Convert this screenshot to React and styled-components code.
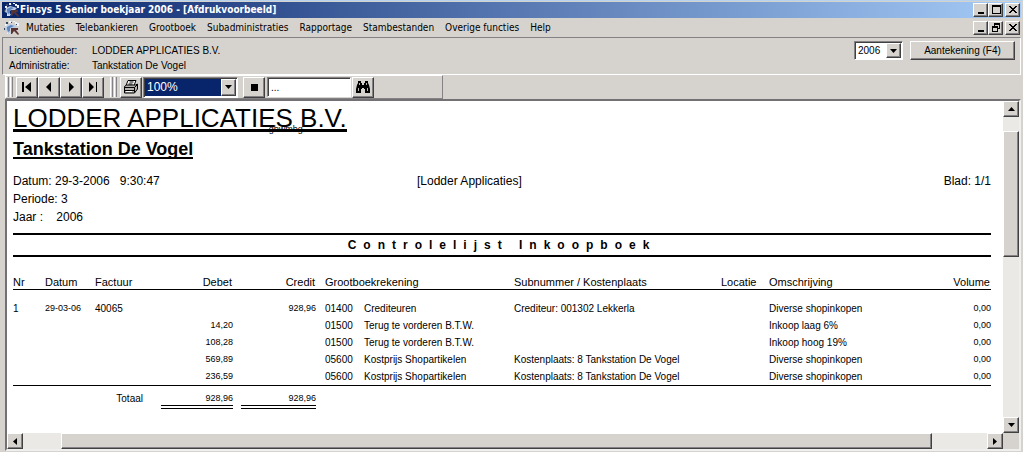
import React from "react";
import styled, { createGlobalStyle, css } from "styled-components";

const FACE = "#d6d3ce";

const Global = createGlobalStyle`
  * { box-sizing: border-box; }
  html, body { margin: 0; padding: 0; background: ${FACE}; }
  body { font-family: "Liberation Sans", Arial, sans-serif; color: #000; overflow: hidden; }
  button, input, select { font: inherit; color: inherit; margin: 0; border-radius: 0; }
`;

const raised = css`
  border: 1px solid;
  border-color: #fff #404040 #404040 #fff;
  box-shadow: inset -1px -1px 0 #848284;
  background: ${FACE};
`;

const sunken = css`
  border: 1px solid;
  border-color: #848284 #fff #fff #848284;
  box-shadow: inset 1px 1px 0 #404040;
  background: #fff;
`;

const Window = styled.div`
  display: flex;
  flex-direction: column;
  height: 100vh;
  min-height: 440px;
  padding: 1px 2px;
  border-top: 1px solid #b5d3ef;
  background: ${FACE};
`;

const TitleBar = styled.header`
  display: flex;
  align-items: center;
  height: 16px;
  padding: 0 1px 0 2px;
  background: linear-gradient(to right, #08246b, #a5cbf7);
`;

const Title = styled.h1`
  flex: 1;
  margin: 0;
  color: #fff;
  font: bold 10px/16px "DejaVu Sans Condensed", Tahoma, sans-serif;
  white-space: nowrap;
`;

const Caption = styled.div`
  display: flex;
`;

const CaptionButton = styled.button`
  ${raised}
  display: grid;
  place-items: center;
  width: 15px;
  height: 14px;
  padding: 0;
  margin-left: ${(p) => (p.$apart ? "2px" : "0")};
`;

const MenuBar = styled.nav`
  display: flex;
  align-items: center;
  height: 19px;
  padding: 0 1px 0 2px;
  font: 10px/18px "DejaVu Sans Condensed", Tahoma, sans-serif;
`;

const MenuList = styled.ul`
  display: flex;
  flex: 1;
  gap: 11px;
  margin: 0;
  padding: 0 0 0 6px;
  list-style: none;
  white-space: nowrap;
`;

const MenuLink = styled.a`
  color: inherit;
  text-decoration: none;
`;

const InfoPanel = styled.section`
  display: flex;
  justify-content: space-between;
  align-items: flex-start;
  height: 38px;
  padding: 3px 5px 0 6px;
  border: 1px solid;
  border-color: #848284 #fff #fff #848284;
`;

const Facts = styled.dl`
  display: grid;
  grid-template-columns: 83px auto;
  margin: 2px 0 0;
  font-size: 10px;
  line-height: 15px;
  white-space: nowrap;
`;

const Term = styled.dt`
  margin: 0;
`;

const Fact = styled.dd`
  margin: 0;
`;

const Actions = styled.div`
  display: flex;
  gap: 7px;
  font-size: 10px;
`;

const NoteButton = styled.button`
  ${raised}
  width: 105px;
  height: 19px;
  padding: 0;
`;

const Combo = styled.div`
  ${sunken}
  display: grid;
  grid-template-columns: 1fr 15px;
  width: ${(p) => p.$width};
  height: ${(p) => p.$height};
  padding: 1px;
`;

const ComboSelect = styled.select`
  grid-column: 1 / 3;
  grid-row: 1;
  appearance: none;
  border: 0;
  outline: 0;
  padding: 0 16px 0 2px;
  font-size: ${(p) => (p.$selected ? "12px" : "10px")};
  color: ${(p) => (p.$selected ? "#fff" : "#000")};
  background: ${(p) => (p.$selected ? "#08246b" : "#fff")};
`;

const ComboArrow = styled.span`
  ${raised}
  grid-column: 2;
  grid-row: 1;
  display: grid;
  place-items: center;
  pointer-events: none;
  z-index: 1;
`;

const ToolRow = styled.div`
  display: flex;
  height: 24px;
  padding-left: 3px;
`;

const ToolBar = styled.div`
  display: flex;
  align-items: center;
  width: 438px;
  border: 1px solid;
  border-color: #fff #848284 #848284 #fff;
`;

const Grip = styled.span`
  width: 8px;
  height: 20px;
  margin: 0 2px 0 ${(p) => (p.$apart ? "6px" : "0")};
  background: repeating-linear-gradient(to right, #fff 0 1px, ${FACE} 1px 2px, #848284 2px 3px, ${FACE} 3px 4px);
`;

const ToolButton = styled.button`
  ${raised}
  display: grid;
  place-items: center;
  width: 22px;
  height: 21px;
  padding: 0;
  margin-right: ${(p) => (p.$gap ? "2px" : "0")};
`;

const SearchBox = styled.input`
  ${sunken}
  width: 84px;
  height: 20px;
  margin-right: 1px;
  padding: 0 3px;
  font-size: 10px;
  outline: 0;
`;

const ComboSlot = styled.div`
  margin: 0 5px 0 1px;
`;

const Preview = styled.main`
  flex: 1;
  min-height: 0;
  display: grid;
  grid-template: minmax(0, 1fr) 16px / minmax(0, 1fr) 16px;
  margin: 0 0 0 3px;
  border: 2px solid;
  border-color: #737173 #efefef #efefef #737173;
`;

const Report = styled.article`
  overflow: hidden;
  padding: 6px 12px 0 6px;
  background: #fff;
`;

const Company = styled.h2`
  position: relative;
  width: max-content;
  margin: 0;
  border-bottom: 3px solid #000;
  font-size: 26px;
  font-weight: normal;
  line-height: 22px;
  white-space: nowrap;
`;

const Overprint = styled.span`
  position: absolute;
  right: 44px;
  bottom: -5px;
  font-size: 9px;
  line-height: 9px;
`;

const Branch = styled.h3`
  width: max-content;
  margin: 9px 0 13px;
  border-bottom: 2px solid #000;
  font-size: 18px;
  line-height: 16px;
`;

const Meta = styled.div`
  display: grid;
  grid-template-columns: 404px 1fr auto;
  font-size: 12px;
  line-height: 18px;
  white-space: pre;
`;

const MetaText = styled.span`
  text-align: ${(p) => p.$align || "left"};
`;

const ReportTitle = styled.h4`
  margin: 7px 0 19px;
  border: solid #000;
  border-width: 2px 0;
  font-size: 12px;
  line-height: 20px;
  letter-spacing: 7px;
  text-align: center;
`;

const Ledger = styled.table`
  width: 100%;
  table-layout: fixed;
  border-collapse: collapse;
  font-size: 10px;
  line-height: 13px;
  white-space: nowrap;
`;

const Col = styled.col`
  width: ${(p) => p.$w};
`;

const Head = styled.th`
  padding: 0 ${(p) => (p.$right ? "1px" : "0")} 0 ${(p) => (p.$inset ? "9px" : "0")};
  border-bottom: 1px solid #000;
  font-size: 11px;
  font-weight: normal;
  text-align: ${(p) => (p.$right ? "right" : "left")};
`;

const Cell = styled.td`
  height: 17px;
  padding: 0 0 0 ${(p) => (p.$inset ? "9px" : "0")};
  font-size: ${(p) => (p.$num ? "9px" : "10px")};
  text-align: ${(p) => (p.$right ? "right" : "left")};
`;

const Body = styled.tbody`
  border-bottom: 1px solid #000;
  &::before {
    content: "";
    display: block;
    height: 10px;
  }
`;

const Total = styled.td`
  padding: 6px ${(p) => (p.$label ? "12px" : "0")} 0 0;
  text-align: right;
  font-size: ${(p) => (p.$label ? "10px" : "9px")};
  vertical-align: top;
`;

const Sum = styled.span`
  display: inline-block;
  width: ${(p) => p.$w};
  border-bottom: 4px double #000;
`;

const Bar = styled.div`
  display: flex;
  flex-direction: ${(p) => (p.$vertical ? "column" : "row")};
  background: #ebe9e6;
`;

const ScrollButton = styled.button`
  ${raised}
  display: grid;
  place-items: center;
  flex: none;
  width: 16px;
  height: 16px;
  padding: 0;
`;

const Track = styled.span`
  flex: ${(p) => p.$share} 1 0;
`;

const Thumb = styled.span`
  ${raised}
  flex: ${(p) => p.$share} 1 0;
`;

const ARROWS = {
  up: "0,4 7,4 3.5,0",
  down: "0,0 7,0 3.5,4",
  left: "4,0 4,7 0,3.5",
  right: "0,0 0,7 4,3.5",
};

function Arrow({ dir }) {
  const flat = dir === "up" || dir === "down";
  return (
    <svg width={flat ? 7 : 4} height={flat ? 4 : 7} aria-hidden="true">
      <polygon points={ARROWS[dir]} />
    </svg>
  );
}

function AppLogo() {
  return (
    <svg width="16" height="16" viewBox="0 0 16 16" aria-hidden="true">
      <path d="M5 1h2v2H5zM9 1h2v1H9zM13 3h2v3h-2zM1 4h2v2H1zM3 11h3v3H3zM11 2h2v2h-2z" fill="#eef3fb" />
      <path d="M2 6l4-2 4 1 3 1-2 2-4 0-2 2 2 3-3 1-1-3-2-1z" fill="#b9cbe6" />
      <path d="M3 7l4-2 3 1-4 2 0 3-2 1-1-3z" fill="#5f86bd" />
      <path d="M2 2h2v2H2zM7 2h1v1H7zM12 4h1v1h-1zM0 8h1v2H0z" fill="#39495f" />
      <path d="M7 8h7v2h-2l3 4-1 1-4-4-2 3H7z" fill="#5a3434" />
    </svg>
  );
}

function Glyph({ name }) {
  const shapes = {
    min: <path d="M2 7h6v2H2z" />,
    max: <path d="M1 0h9v9H1zM2 2v6h7V2z" fillRule="evenodd" />,
    restore: <path d="M3 0h6v6H7v3H1V3h2zM4 2v1h3v2h1V2zM2 5v3h4V5z" fillRule="evenodd" />,
    close: <path d="M1 1l7 7M2 1l7 7M8 1l-7 7M9 1l-7 7" stroke="#000" fill="none" />,
  };
  return (
    <svg width="10" height="10" aria-hidden="true">
      {shapes[name]}
    </svg>
  );
}

function ToolGlyph({ name }) {
  const shapes = {
    first: <path d="M3 3h2v10H3zM12 3v10L6 8z" />,
    prev: <path d="M10 3v10L5 8z" />,
    next: <path d="M6 3v10l5-5z" />,
    last: <path d="M4 3v10l5-5zM11 3h1v10h-1z" />,
    stop: <path d="M5 5h7v7H5z" />,
    print: (
      <>
        <path d="M5 1.500h8l-2 5H3z" fill="#fff" stroke="#000" />
        <path d="M6.500 3h4M5.500 5h4" stroke="#000" />
        <path d="M1.500 7.500l2-1.500h9l2-1v5l-3 4h-10z" fill="#b5b2ad" stroke="#000" />
        <path d="M1.500 8.500h10l3-3M11.500 8.500v5M2 11.500h9" fill="none" stroke="#000" />
        <path d="M3 12h6v1H3z" fill="#fff" />
      </>
    ),
    find: (
      <>
        <path d="M3 2h3v2h1v2h2V4h1V2h3v2l1 2 1 4v4h-5v-4H9V9H7v1H6v4H1v-4l1-4 1-2z" />
        <path d="M4.500 4v2M11.500 4v2M3.500 9v3M12.500 9v3" fill="none" stroke="#b5b2ad" />
      </>
    ),
  };
  return (
    <svg width="16" height="16" aria-hidden="true">
      {shapes[name]}
    </svg>
  );
}

function WindowButtons({ middle }) {
  return (
    <Caption>
      <CaptionButton aria-label="Minimaliseren"><Glyph name="min" /></CaptionButton>
      <CaptionButton aria-label="Formaat"><Glyph name={middle} /></CaptionButton>
      <CaptionButton $apart aria-label="Sluiten"><Glyph name="close" /></CaptionButton>
    </Caption>
  );
}

const MENU = ["Mutaties", "Telebankieren", "Grootboek", "Subadministraties", "Rapportage", "Stambestanden", "Overige functies", "Help"];

const NAVIGATION = [
  ["first", "Eerste pagina"],
  ["prev", "Vorige pagina"],
  ["next", "Volgende pagina"],
  ["last", "Laatste pagina"],
];

const COLUMNS = ["32px", "50px", "60px", "78px", "83px", "48px", "150px", "207px", "48px", "auto", "60px"];

const ROWS = [
  ["1", "29-03-06", "40065", "", "928,96", "01400", "Crediteuren", "Crediteur: 001302 Lekkerla", "Diverse shopinkopen"],
  ["", "", "", "14,20", "", "01500", "Terug te vorderen B.T.W.", "", "Inkoop laag 6%"],
  ["", "", "", "108,28", "", "01500", "Terug te vorderen B.T.W.", "", "Inkoop hoog 19%"],
  ["", "", "", "569,89", "", "05600", "Kostprijs Shopartikelen", "Kostenplaats: 8 Tankstation De Vogel", "Diverse shopinkopen"],
  ["", "", "", "236,59", "", "05600", "Kostprijs Shopartikelen", "Kostenplaats: 8 Tankstation De Vogel", "Diverse shopinkopen"],
];

export default function App() {
  return (
    <Window>
      <Global />
      <TitleBar>
        <AppLogo />
        <Title>Finsys 5 Senior boekjaar 2006 - [Afdrukvoorbeeld]</Title>
        <WindowButtons middle="max" />
      </TitleBar>
      <MenuBar>
        <AppLogo />
        <MenuList>
          {MENU.map((label) => (
            <li key={label}><MenuLink href="#">{label}</MenuLink></li>
          ))}
        </MenuList>
        <WindowButtons middle="restore" />
      </MenuBar>
      <InfoPanel>
        <Facts>
          <Term>Licentiehouder:</Term>
          <Fact>LODDER APPLICATIES B.V.</Fact>
          <Term>Administratie:</Term>
          <Fact>Tankstation De Vogel</Fact>
        </Facts>
        <Actions>
          <Combo $width="49px" $height="19px">
            <ComboSelect aria-label="Boekjaar" defaultValue="2006">
              <option>2006</option>
            </ComboSelect>
            <ComboArrow><Arrow dir="down" /></ComboArrow>
          </Combo>
          <NoteButton>Aantekening (F4)</NoteButton>
        </Actions>
      </InfoPanel>
      <ToolRow>
        <ToolBar role="toolbar">
          <Grip />
          {NAVIGATION.map(([name, label]) => (
            <ToolButton key={name} aria-label={label}><ToolGlyph name={name} /></ToolButton>
          ))}
          <Grip $apart />
          <ToolButton aria-label="Afdrukken"><ToolGlyph name="print" /></ToolButton>
          <ComboSlot>
            <Combo $width="95px" $height="21px">
              <ComboSelect $selected aria-label="Zoom" defaultValue="100%">
                <option>100%</option>
              </ComboSelect>
              <ComboArrow><Arrow dir="down" /></ComboArrow>
            </Combo>
          </ComboSlot>
          <ToolButton $gap aria-label="Stoppen"><ToolGlyph name="stop" /></ToolButton>
          <SearchBox aria-label="Zoeken" defaultValue="..." />
          <ToolButton aria-label="Zoek tekst"><ToolGlyph name="find" /></ToolButton>
        </ToolBar>
      </ToolRow>
      <Preview>
        <Report>
          <Company>
            LODDER APPLICATIES B.V.
            <Overprint>gbwmbg</Overprint>
          </Company>
          <Branch>Tankstation De Vogel</Branch>
          <Meta>
            <MetaText>{"Datum: 29-3-2006   9:30:47"}</MetaText>
            <MetaText>[Lodder Applicaties]</MetaText>
            <MetaText $align="right">Blad: 1/1</MetaText>
            <MetaText>Periode: 3</MetaText>
          </Meta>
          <Meta>
            <MetaText>{"Jaar :    2006"}</MetaText>
          </Meta>
          <ReportTitle>Controlelijst Inkoopboek</ReportTitle>
          <Ledger>
            <colgroup>
              {COLUMNS.map((w, i) => <Col key={i} $w={w} />)}
            </colgroup>
            <thead>
              <tr>
                <Head>Nr</Head>
                <Head>Datum</Head>
                <Head>Factuur</Head>
                <Head $right>Debet</Head>
                <Head $right>Credit</Head>
                <Head $inset colSpan={2}>Grootboekrekening</Head>
                <Head>Subnummer / Kostenplaats</Head>
                <Head>Locatie</Head>
                <Head>Omschrijving</Head>
                <Head $right>Volume</Head>
              </tr>
            </thead>
            <Body>
              {ROWS.map(([nr, date, invoice, debit, credit, code, account, sub, text], i) => (
                <tr key={i}>
                  <Cell>{nr}</Cell>
                  <Cell $num>{date}</Cell>
                  <Cell>{invoice}</Cell>
                  <Cell $num $right>{debit}</Cell>
                  <Cell $num $right>{credit}</Cell>
                  <Cell $inset>{code}</Cell>
                  <Cell>{account}</Cell>
                  <Cell>{sub}</Cell>
                  <Cell />
                  <Cell>{text}</Cell>
                  <Cell $num $right>0,00</Cell>
                </tr>
              ))}
            </Body>
            <tfoot>
              <tr>
                <Total $label colSpan={3}>Totaal</Total>
                <Total><Sum $w="72px">928,96</Sum></Total>
                <Total><Sum $w="75px">928,96</Sum></Total>
                <td colSpan={6} />
              </tr>
            </tfoot>
          </Ledger>
        </Report>
        <Bar $vertical>
          <ScrollButton aria-label="Omhoog"><Arrow dir="up" /></ScrollButton>
          <Track $share={14} />
          <Thumb $share={125} />
          <Track $share={162} />
          <ScrollButton aria-label="Omlaag"><Arrow dir="down" /></ScrollButton>
        </Bar>
        <Bar>
          <ScrollButton aria-label="Links"><Arrow dir="left" /></ScrollButton>
          <Track $share={38} />
          <Thumb $share={873} />
          <Track $share={55} />
          <ScrollButton aria-label="Rechts"><Arrow dir="right" /></ScrollButton>
        </Bar>
      </Preview>
    </Window>
  );
}
